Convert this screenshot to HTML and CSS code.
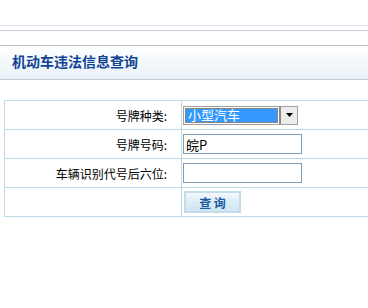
FILE: index.html
```html
<!DOCTYPE html>
<html lang="zh-CN">
  <head>
    <meta charset="UTF-8" />
    <title>机动车违法信息查询</title>
    <link rel="stylesheet" href="styles.css">
  </head>
  <body>
    <div class="top"></div>
    <div class="gap"></div>
    <div class="blank"></div>
    <div class="title">机动车违法信息查询</div>

    <table class="query">
      <tr>
        <td class="label">号牌种类:</td>
        <td class="field">
          <div class="select">
            <span class="select-text">小型汽车</span>
            <span class="select-btn">
              <svg viewBox="0 0 7 4" width="7" height="4"><path d="M0 0h7L3.5 4z" fill="#000" /></svg>
            </span>
          </div>
        </td>
      </tr>
      <tr>
        <td class="label">号牌号码:</td>
        <td class="field"><input class="text" type="text" value="皖P" /></td>
      </tr>
      <tr>
        <td class="label">车辆识别代号后六位:</td>
        <td class="field"><input class="text" type="text" value="" /></td>
      </tr>
      <tr>
        <td class="label"></td>
        <td class="field"><button class="btn" type="button">查 询</button></td>
      </tr>
    </table>
  </body>
</html>
```

FILE: styles.css
```css
body {
  margin: 0;
  padding: 0;
  background-color: #fff;
  font-family: "Noto Sans CJK SC", "Liberation Sans", sans-serif;
  font-size: 12px;
  color: #000;
  overflow: hidden;
}
.top {
  height: 25px;
  border-bottom: 1px solid #dedee6;
}
.gap {
  height: 4px;
  border-bottom: 1px solid #c6cad2;
}
.blank {
  height: 14px;
  border-bottom: 1px solid #b9c1cc;
}
/* barra do titulo */
.title {
  height: 33px;
  line-height: 31px;
  padding-left: 12px;
  font-size: 14px;
  font-weight: bold;
  color: #0f4396;
  background: linear-gradient(#ffffff, #e9f1f7);
  border-bottom: 1px solid #c3c9d2;
}
/* tabela segue alem da borda direita */
.query {
  margin: 20px 0 0 4px;
  width: 364px;
  border-collapse: collapse;
  border: 1px solid #bcdbe4;
  border-right: 0;
}
.query td {
  height: 28px;
  padding: 0;
  border: 1px solid #bcdbe4;
}
.query td.field {
  border-right: 0;
}
.label {
  width: 162px;
  padding-right: 14px !important;
  text-align: right;
}
.field {
  padding-left: 1px !important;
}
.select {
  display: flex;
  width: 113px;
  height: 17px;
  border: 1px solid #a0a0a0;
  padding: 0;
  background: #fff;
}
.select-text {
  flex: 1;
  margin: 1px;
  padding-left: 3px;
  line-height: 13px;
  background-color: #3399ff;
  color: #fff;
  font-size: 13px;
  outline: 1px dotted #e07000;
  outline-offset: -1px;
}
.select-btn {
  width: 16px;
  display: flex;
  align-items: center;
  justify-content: center;
  background: #ececec;
  border-left: 2px solid #888;
}
.text {
  box-sizing: border-box;
  width: 119px;
  height: 20px;
  margin: 0;
  padding: 0 2px;
  border: 1px solid #7f9db9;
  font-family: "Noto Sans CJK SC", "Liberation Sans", sans-serif;
  font-size: 13px;
  color: #000;
}
.btn {
  box-sizing: border-box;
  width: 57px;
  height: 22px;
  margin: 0 0 0 1px;
  padding: 0;
  border: 2px solid #c4dbe8;
  background: linear-gradient(#f3f9fd, #dcecf5 55%, #cfe6f0);
  font-family: "Noto Sans CJK SC", "Liberation Sans", sans-serif;
  font-size: 12px;
  font-weight: bold;
  color: #1d5aa6;
}
```
